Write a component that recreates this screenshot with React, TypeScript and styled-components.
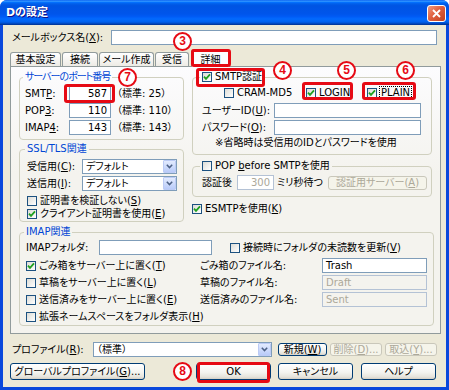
import React from "react";
import styled, { createGlobalStyle } from "styled-components";

const GlobalStyle = createGlobalStyle`
  html, body { margin: 0; padding: 0; background: #fff; }
  body {
    font-family: "DejaVu Sans", "Noto Sans CJK JP", sans-serif;
    font-size: 10px;
    line-height: 12px;
    font-feature-settings: "palt";
    color: #000;
  }
  * { box-sizing: border-box; }
`;

const Window = styled.div`
  position: relative;
  width: 449px;
  height: 390px;
  display: flex;
  flex-direction: column;
  background: #0a48dc;
  border-radius: 7px 7px 0 0;
  overflow: hidden;
`;

const TitleBar = styled.div`
  height: 25px;
  flex: none;
  display: flex;
  align-items: center;
  padding: 0 3px 0 6px;
  background: linear-gradient(
    #0058ee 0%, #3593ff 4%, #288eff 6%, #127dff 8%, #036ffc 10%,
    #0262ee 14%, #0057e5 20%, #0054e3 24%, #0055eb 56%, #005bf5 66%,
    #026afe 76%, #0062ef 86%, #0052d6 92%, #0040ab 96%, #003092 100%
  );
`;

const Title = styled.div`
  flex: 1;
  color: #fff;
  font-weight: bold;
  font-size: 11px;
  text-shadow: 1px 1px #0f1089;
`;

const CloseButton = styled.div`
  width: 19px;
  height: 17px;
  margin-top: 2px;
  border: 1px solid #fff;
  border-radius: 3px;
  background: linear-gradient(135deg, #f09a7f 0%, #e0603f 45%, #c2411f 100%);
  display: flex;
  align-items: center;
  justify-content: center;
`;

const Body = styled.div`
  flex: 1;
  display: flex;
  flex-direction: column;
  background: #ece9d8;
  border: 3px solid #0a48dc;
  border-top: 0;
  padding: 0 5px 0 7px;
`;

const Row = styled.div<{ $mt?: number; $pl?: number }>`
  display: flex;
  align-items: center;
  height: 15px;
  flex: none;
  margin-top: ${p => p.$mt ?? 0}px;
  padding-left: ${p => p.$pl ?? 0}px;
  white-space: nowrap;
`;

const FieldLabel = styled.span<{ $w: number }>`
  width: ${p => p.$w}px;
  flex: none;
  white-space: nowrap;
`;

const Text = styled.span<{ $ml?: number; $w?: number; $muted?: boolean }>`
  margin-left: ${p => p.$ml ?? 0}px;
  ${p => (p.$w ? `width: ${p.$w}px; flex: none;` : "")}
  color: ${p => (p.$muted ? "#aca899" : "inherit")};
  white-space: nowrap;
`;

const Key = styled.span`
  text-decoration: underline;
`;

const TextBox = styled.div<{ $w: number; $ml?: number; $right?: boolean; $muted?: boolean; $fill?: string }>`
  width: ${p => p.$w}px;
  height: 15px;
  flex: none;
  margin-left: ${p => p.$ml ?? 0}px;
  border: 1px solid ${p => (p.$muted ? "#b4c2d5" : "#7f9db9")};
  background: ${p => p.$fill ?? "#fff"};
  color: ${p => (p.$muted ? "#aca899" : "#000")};
  padding: 0 3px;
  display: flex;
  align-items: center;
  justify-content: ${p => (p.$right ? "flex-end" : "flex-start")};
`;

const Combo = styled.div<{ $w: number }>`
  width: ${p => p.$w}px;
  height: 15px;
  flex: none;
  border: 1px solid #7f9db9;
  background: #fff;
  display: flex;
  align-items: center;
  padding: 0 0 0 3px;
`;

const ComboText = styled.span`
  flex: 1;
  white-space: nowrap;
`;

const ComboArrow = styled.span`
  width: 13px;
  height: 13px;
  flex: none;
  border: 1px solid #bccbf5;
  border-radius: 1px;
  background: linear-gradient(#e3ebfe, #b9cbf9);
  display: flex;
  align-items: center;
  justify-content: center;
`;

const Button = styled.div<{ $w: number; $h: number; $ml?: number; $disabled?: boolean }>`
  width: ${p => p.$w}px;
  height: ${p => p.$h}px;
  flex: none;
  margin-left: ${p => p.$ml ?? 0}px;
  border: 1px solid ${p => (p.$disabled ? "#c9c7ba" : "#003c74")};
  border-radius: 3px;
  background: ${p =>
    p.$disabled ? "#f5f4ea" : "linear-gradient(#ffffff 0%, #f4f4f0 55%, #e6e4dc 85%, #d6d0c5 100%)"};
  color: ${p => (p.$disabled ? "#aca899" : "#000")};
  display: flex;
  align-items: center;
  justify-content: center;
  white-space: nowrap;
`;

const TabStrip = styled.div`
  display: flex;
  align-items: flex-end;
  height: 18px;
  margin-top: 4px;
  margin-bottom: -1px;
  gap: 1px;
`;

const Tab = styled.div<{ $w: number; $active?: boolean }>`
  position: relative;
  z-index: ${p => (p.$active ? 2 : 0)};
  width: ${p => p.$w}px;
  height: ${p => (p.$active ? 18 : 15)}px;
  margin-left: ${p => (p.$active ? 1 : 0)}px;
  border: 1px solid #919b9c;
  border-bottom: 0;
  border-top: ${p => (p.$active ? "3px solid #e68b2c" : "1px solid #919b9c")};
  border-radius: 3px 3px 0 0;
  background: ${p => (p.$active ? "#fcfcfe" : "linear-gradient(#ffffff, #eceae3)")};
  display: flex;
  align-items: center;
  justify-content: center;
  white-space: nowrap;
`;

const Panel = styled.div`
  position: relative;
  z-index: 1;
  height: 268px;
  flex: none;
  border: 1px solid #919b9c;
  background: linear-gradient(#fcfcfe, #f4f3ee 40%);
  padding: 4px 6px 0 8px;
`;

const TopGrid = styled.div`
  display: grid;
  grid-template-columns: 165px 240px;
  column-gap: 8px;
  align-items: start;
`;

const Column = styled.div`
  display: flex;
  flex-direction: column;
`;

const Group = styled.fieldset<{ $pad: string; $mt?: number }>`
  margin: ${p => p.$mt ?? 0}px 0 0;
  padding: ${p => p.$pad};
  border: 1px solid #d0d0bf;
  border-radius: 4px;
  min-width: 0;
`;

const Legend = styled.legend<{ $plain?: boolean; $tight?: boolean }>`
  height: 12px;
  padding: 0 2px;
  margin-left: -2px;
  line-height: 12px;
  display: flex;
  align-items: center;
  letter-spacing: ${p => (p.$tight ? "-1px" : "0")};
  color: ${p => (p.$plain ? "#000" : "#0046d5")};
`;

const Stack = styled.div<{ $gap: number }>`
  display: flex;
  flex-direction: column;
  gap: ${p => p.$gap}px;
`;

const CheckLabel = styled.span<{ $w?: number; $ml?: number; $mt?: number }>`
  display: inline-flex;
  align-items: center;
  gap: 3px;
  height: 13px;
  flex: none;
  ${p => (p.$w ? `width: ${p.$w}px;` : "")}
  margin-left: ${p => p.$ml ?? 0}px;
  margin-top: ${p => p.$mt ?? 0}px;
  white-space: nowrap;
`;

const Box = styled.span`
  width: 10px;
  height: 10px;
  flex: none;
  border: 1px solid #1c5180;
  background: linear-gradient(135deg, #dcdcd7 0%, #ffffff 100%);
  display: flex;
  align-items: center;
  justify-content: center;
`;

const Focus = styled.span`
  outline: 1px dotted #000;
  padding: 0 1px;
`;

const Marked = styled.span<{ $inset: string }>`
  position: relative;
  display: inline-flex;
  align-items: flex-end;
  &::after {
    content: "";
    position: absolute;
    inset: ${p => p.$inset};
    border: 3px solid #e60a14;
    border-radius: 3px;
    pointer-events: none;
    z-index: 5;
  }
`;

const ImapGrid = styled.div`
  display: grid;
  grid-template-columns: 174px 122px 105px;
  grid-auto-rows: 15px;
  row-gap: 2px;
  margin-top: 3px;
  align-items: center;
`;

const Badge = styled.span<{ $x: number; $y: number }>`
  position: absolute;
  left: ${p => p.$x}px;
  top: ${p => p.$y}px;
  width: 19px;
  height: 19px;
  border: 2px solid #e60a14;
  border-radius: 50%;
  background: #fff;
  color: #e60a14;
  font: bold 12px/15px "Liberation Sans", sans-serif;
  text-align: center;
  z-index: 10;
`;

const Tick = () => (
  <svg width="8" height="8" viewBox="0 0 8 8">
    <path d="M1 3.6 L3 5.8 L7 1.4" stroke="#21a121" strokeWidth="1.8" fill="none" />
  </svg>
);

const Check: React.FC<{ on?: boolean; children: React.ReactNode; w?: number; ml?: number; mt?: number }> = ({
  on,
  children,
  w,
  ml,
  mt
}) => (
  <CheckLabel $w={w} $ml={ml} $mt={mt}>
    <Box>{on && <Tick />}</Box>
    <span>{children}</span>
  </CheckLabel>
);

const Chevron = () => (
  <svg width="7" height="5" viewBox="0 0 7 5">
    <path d="M0.8 0.8 L3.5 3.6 L6.2 0.8" stroke="#4d6185" strokeWidth="1.5" fill="none" />
  </svg>
);

const App: React.FC = () => (
  <>
    <GlobalStyle />
    <Window>
      <TitleBar>
        <Title>Dの設定</Title>
        <CloseButton>
          <svg width="9" height="9" viewBox="0 0 9 9">
            <path d="M1 1 L8 8 M8 1 L1 8" stroke="#fff" strokeWidth="1.8" />
          </svg>
        </CloseButton>
      </TitleBar>
      <Body>
        <Row $mt={5} $pl={2}>
          <FieldLabel $w={99}>
            メールボックス名(<Key>X</Key>):
          </FieldLabel>
          <TextBox $w={326} />
        </Row>

        <TabStrip>
          <Tab $w={51}>基本設定</Tab>
          <Tab $w={36}>接続</Tab>
          <Tab $w={55}>メール作成</Tab>
          <Tab $w={34}>受信</Tab>
          <Marked $inset="0 -1px 0 1px" style={{ zIndex: 2 }}>
            <Tab $w={39} $active>
              詳細
            </Tab>
          </Marked>
        </TabStrip>

        <Panel>
          <TopGrid>
            <Column>
              <Group $pad="3px 6px 4px 5px">
                <Legend $tight>サーバーのポート番号</Legend>
                <Stack $gap={2}>
                  <Row>
                    <FieldLabel $w={44}>
                      SMT<Key>P</Key>:
                    </FieldLabel>
                    <Marked $inset="-2px -4px -2px -5px">
                      <TextBox $w={42} $right>
                        587
                      </TextBox>
                    </Marked>
                    <Text $ml={6}>（標準: 25）</Text>
                  </Row>
                  <Row>
                    <FieldLabel $w={44}>
                      POP<Key>3</Key>:
                    </FieldLabel>
                    <TextBox $w={42} $right>
                      110
                    </TextBox>
                    <Text $ml={6}>（標準: 110）</Text>
                  </Row>
                  <Row>
                    <FieldLabel $w={44}>
                      IMAP<Key>4</Key>:
                    </FieldLabel>
                    <TextBox $w={42} $right>
                      143
                    </TextBox>
                    <Text $ml={6}>（標準: 143）</Text>
                  </Row>
                </Stack>
              </Group>

              <Group $pad="4px 6px 1px 7px" $mt={3}>
                <Legend>SSL/TLS関連</Legend>
                <Stack $gap={2}>
                  <Row>
                    <FieldLabel $w={55}>
                      受信用(<Key>C</Key>):
                    </FieldLabel>
                    <Combo $w={95}>
                      <ComboText>デフォルト</ComboText>
                      <ComboArrow>
                        <Chevron />
                      </ComboArrow>
                    </Combo>
                  </Row>
                  <Row>
                    <FieldLabel $w={55}>
                      送信用(<Key>I</Key>):
                    </FieldLabel>
                    <Combo $w={95}>
                      <ComboText>デフォルト</ComboText>
                      <ComboArrow>
                        <Chevron />
                      </ComboArrow>
                    </Combo>
                  </Row>
                </Stack>
                <Stack $gap={0}>
                  <Check mt={3}>
                    証明書を検証しない(<Key>S</Key>)
                  </Check>
                  <Check on>
                    クライアント証明書を使用(<Key>E</Key>)
                  </Check>
                </Stack>
              </Group>
            </Column>

            <Column>
              <Group $pad="3px 6px 5px 9px">
                <Legend $plain>
                  <Marked $inset="-3px -3px -3px -6px">
                    <Check on>SMTP認証</Check>
                  </Marked>
                </Legend>
                <Row style={{ height: 13 }}>
                  <Check w={82} ml={22}>
                    CRAM-MD5
                  </Check>
                  <Marked $inset="-4px 14px -1px -4px">
                    <Check on w={61}>
                      LOGIN
                    </Check>
                  </Marked>
                  <Marked $inset="-4px -5px -1px -5px">
                    <Check on>
                      <Focus>PLAIN</Focus>
                    </Check>
                  </Marked>
                </Row>
                <Row $mt={4}>
                  <FieldLabel $w={72}>
                    ユーザーID(<Key>U</Key>):
                  </FieldLabel>
                  <TextBox $w={147} />
                </Row>
                <Row $mt={2}>
                  <FieldLabel $w={72}>
                    パスワード(<Key>O</Key>):
                  </FieldLabel>
                  <TextBox $w={147} />
                </Row>
                <Row $mt={2} style={{ height: 12 }}>
                  <Text $ml={13}>※省略時は受信用のIDとパスワードを使用</Text>
                </Row>
              </Group>

              <Group $pad="3px 6px 6px 9px" $mt={5}>
                <Legend $plain>
                  <Check>
                    POP <Key>b</Key>efore SMTPを使用
                  </Check>
                </Legend>
                <Row>
                  <FieldLabel $w={35}>認証後</FieldLabel>
                  <TextBox $w={37} $right $muted>
                    300
                  </TextBox>
                  <Text $ml={3} $w={51}>
                    ミリ秒待つ
                  </Text>
                  <Button $w={99} $h={14} $disabled>
                    認証用サーバー(<Key>A</Key>)
                  </Button>
                </Row>
              </Group>

              <Check on mt={5}>
                ESMTPを使用(<Key>K</Key>)
              </Check>
            </Column>
          </TopGrid>

          <Group $pad="2px 6px 1px 6px" $mt={4}>
            <Legend>IMAP関連</Legend>
            <Row>
              <FieldLabel $w={73}>IMAPフォルダ:</FieldLabel>
              <TextBox $w={113} />
              <Check ml={18}>
                接続時にフォルダの未読数を更新(<Key>V</Key>)
              </Check>
            </Row>
            <ImapGrid>
              <Check on>
                ごみ箱をサーバー上に置く(<Key>T</Key>)
              </Check>
              <span>ごみ箱のファイル名:</span>
              <TextBox $w={105}>Trash</TextBox>
              <Check>
                草稿をサーバー上に置く(<Key>L</Key>)
              </Check>
              <span>草稿のファイル名:</span>
              <TextBox $w={105} $muted $fill="#f4f3ee">
                Draft
              </TextBox>
              <Check>
                送信済みをサーバー上に置く(<Key>E</Key>)
              </Check>
              <span>送信済みのファイル名:</span>
              <TextBox $w={105} $muted $fill="#f4f3ee">
                Sent
              </TextBox>
              <Check>
                拡張ネームスペースをフォルダ表示(<Key>H</Key>)
              </Check>
            </ImapGrid>
          </Group>
        </Panel>

        <Row $mt={8} $pl={2}>
          <FieldLabel $w={81}>
            プロファイル(<Key>R</Key>):
          </FieldLabel>
          <Combo $w={179}>
            <ComboText>（標準）</ComboText>
            <ComboArrow>
              <Chevron />
            </ComboArrow>
          </Combo>
          <Button $w={49} $h={13} $ml={6}>
            新規(<Key>W</Key>)
          </Button>
          <Button $w={52} $h={13} $ml={3} $disabled>
            削除(<Key>D</Key>)...
          </Button>
          <Button $w={52} $h={13} $ml={3} $disabled>
            取込(<Key>Y</Key>)...
          </Button>
        </Row>

        <Row $mt={6} style={{ height: 17 }}>
          <Button $w={135} $h={17}>
            グローバルプロファイル(<Key>G</Key>)...
          </Button>
          <Marked $inset="-1px 1px -3px 1px" style={{ marginLeft: 51 }}>
            <Button $w={75} $h={17}>
              OK
            </Button>
          </Marked>
          <Button $w={75} $h={17} $ml={7}>
            キャンセル
          </Button>
          <Button $w={75} $h={17} $ml={8}>
            ヘルプ
          </Button>
        </Row>
      </Body>

      <Badge $x={173} $y={32}>3</Badge>
      <Badge $x={273} $y={61}>4</Badge>
      <Badge $x={337} $y={61}>5</Badge>
      <Badge $x={396} $y={61}>6</Badge>
      <Badge $x={118} $y={68}>7</Badge>
      <Badge $x={173} $y={362}>8</Badge>
    </Window>
  </>
);

export default App;
